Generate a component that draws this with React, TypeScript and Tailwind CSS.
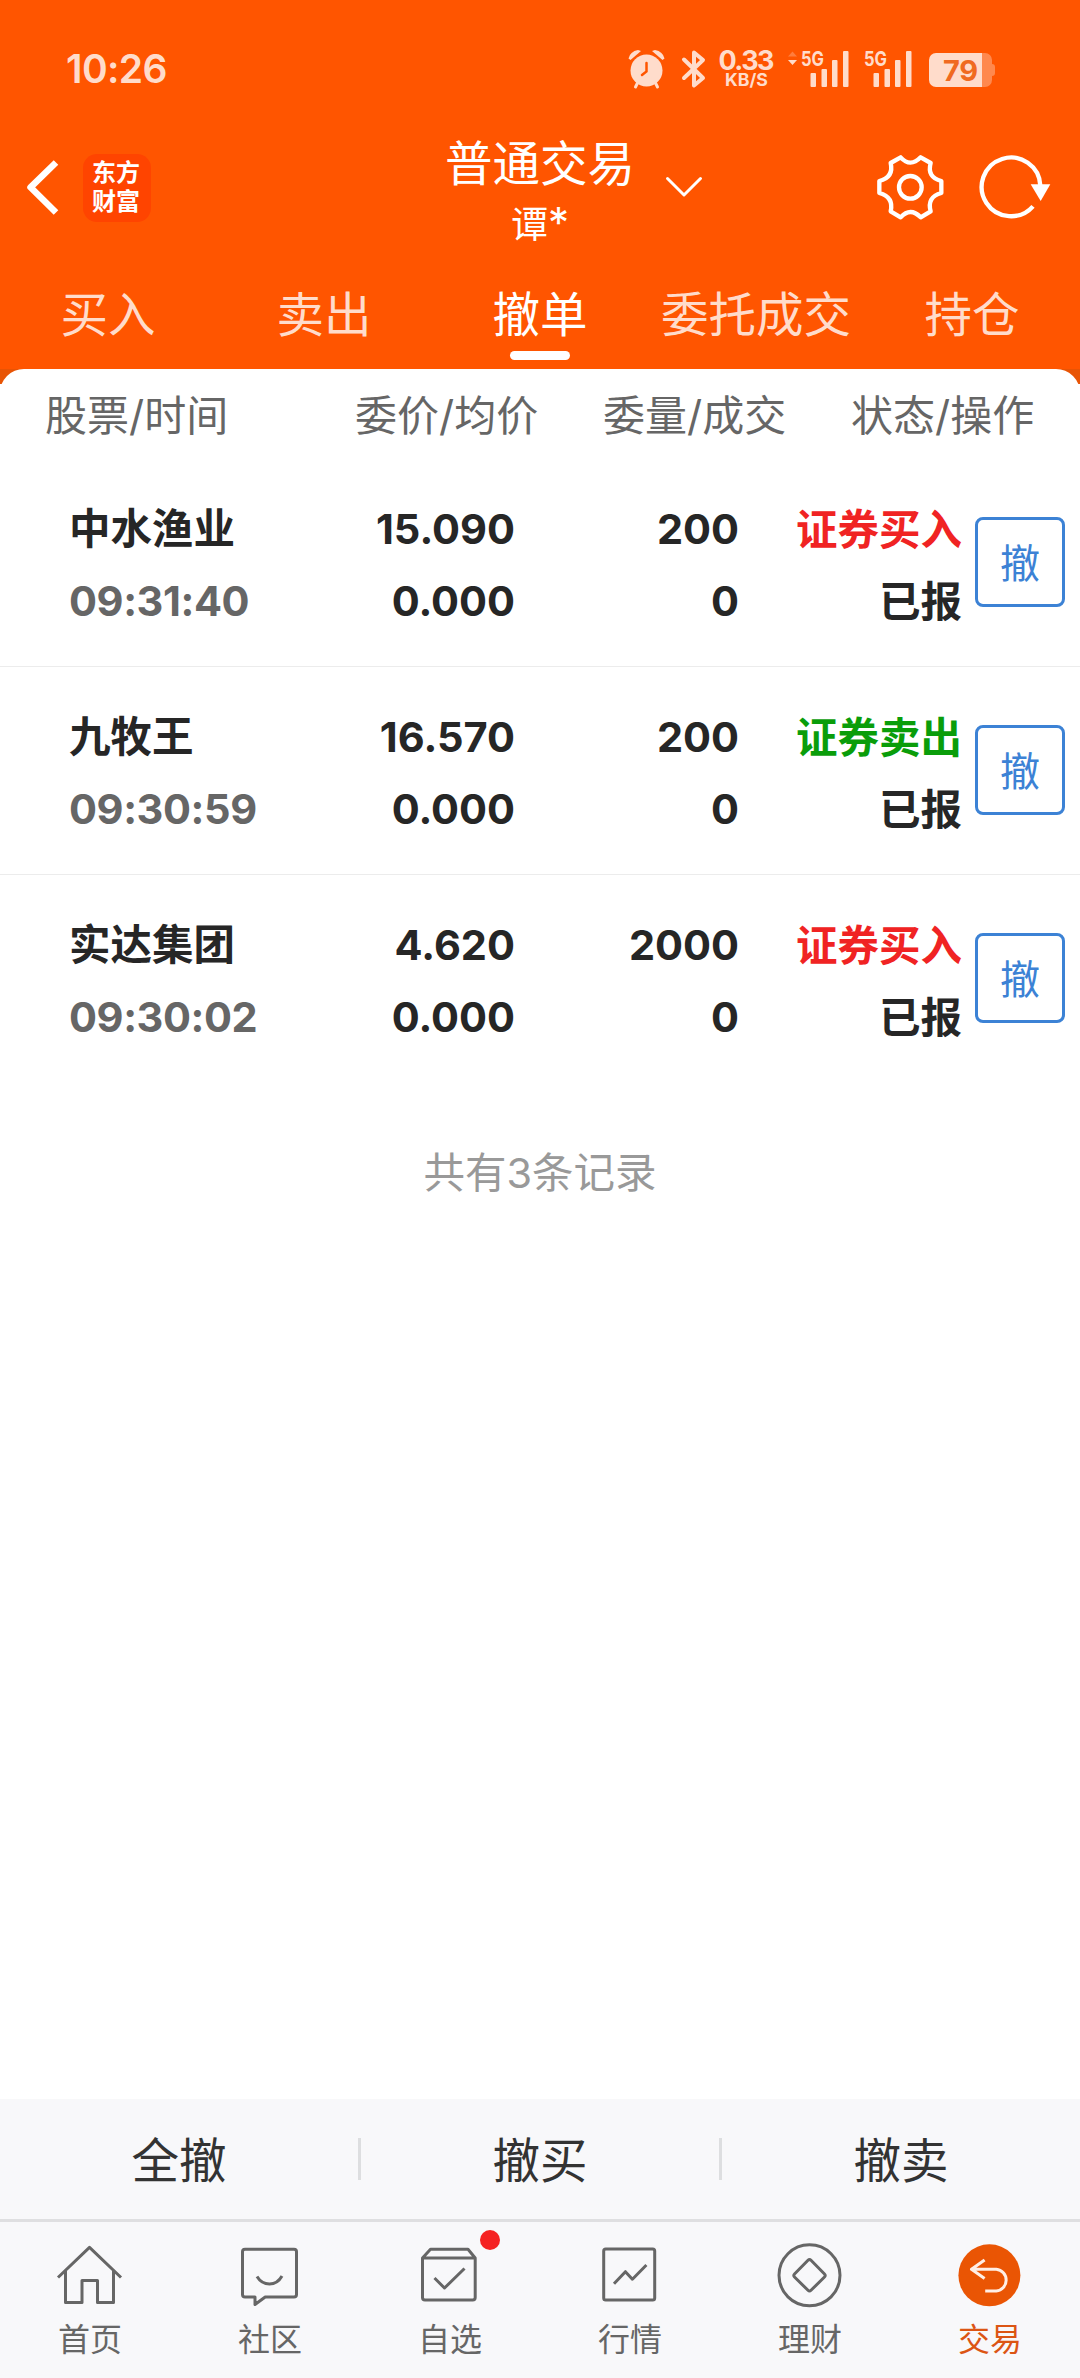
import React from "react";
import { clsx } from "clsx";

const tabs = ["买入", "卖出", "撤单", "委托成交", "持仓"];

const orders = [
  { name: "中水渔业", time: "09:31:40", price: "15.090", avg: "0.000", amount: "200", filled: "0", side: "buy" },
  { name: "九牧王", time: "09:30:59", price: "16.570", avg: "0.000", amount: "200", filled: "0", side: "sell" },
  { name: "实达集团", time: "09:30:02", price: "4.620", avg: "0.000", amount: "2000", filled: "0", side: "buy" },
];

export default function App() {
  return (
    <div className="flex h-[2378px] w-[1080px] flex-col overflow-hidden bg-white font-['Inter','Noto_Sans_CJK_SC',sans-serif] whitespace-nowrap text-[#262626]">
      <div className="h-[369px] bg-[#ff5500] text-white">
        <StatusBar />
        <TitleBar />
        <Tabs />
      </div>
      <div className="flex-1 bg-[linear-gradient(#e85405_15px,#ffffff_15px)]">
        <div className="h-full rounded-t-[24px] bg-white">
          <div className="flex h-[90px] pl-[45px] pt-[17px] text-[42px] leading-[60px] text-[#666666]">
            <span className="w-[310px]">股票/时间</span>
            <span className="w-[248px]">委价/均价</span>
            <span className="w-[248px]">委量/成交</span>
            <span>状态/操作</span>
          </div>
          {orders.map((order, i) => (
            <OrderRow key={order.name} order={order} last={i === orders.length - 1} />
          ))}
          <p className="pt-[60px] text-center text-[41.500px] leading-[60px] text-[#999999]">共有3条记录</p>
        </div>
      </div>
      <div className="flex h-[120px] items-center bg-[#f8f8fa] text-[47.500px] text-[#333333]">
        {["全撤", "撤买", "撤卖"].map((label, i) => (
          <React.Fragment key={label}>
            {i > 0 && <div className="h-[42px] w-[3px] bg-[#dddee0]" />}
            <button className="flex-1 pt-[3px] leading-[60px]">{label}</button>
          </React.Fragment>
        ))}
      </div>
      <BottomNav />
    </div>
  );
}

function OrderRow({ order, last }: { order: (typeof orders)[number]; last: boolean }) {
  return (
    <div
      className={clsx(
        "flex h-[208px] border-b pt-[34px] text-[41.500px] leading-[72px] font-bold",
        last ? "border-transparent" : "border-[#ececec]"
      )}
    >
      <div className="w-[300px] pl-[69px]">
        <p>{order.name}</p>
        <p className="tracking-[-0.4px] text-[#666666]">{order.time}</p>
      </div>
      <div className="w-[215px] text-right">
        <p>{order.price}</p>
        <p>{order.avg}</p>
      </div>
      <div className="w-[224px] text-right">
        <p>{order.amount}</p>
        <p>{order.filled}</p>
      </div>
      <div className="w-[223px] pt-px text-right">
        <p className={order.side === "buy" ? "text-[#f02323]" : "text-[#0a9d0a]"}>
          {order.side === "buy" ? "证券买入" : "证券卖出"}
        </p>
        <p>已报</p>
      </div>
      <button className="mt-[24px] ml-[13px] flex h-[90px] w-[90px] items-center justify-center rounded-[8px] border-3 border-[#3c82d5] pt-[4px] text-[40px] leading-none font-normal text-[#3c82d5]">
        撤
      </button>
    </div>
  );
}

function StatusBar() {
  return (
    <div className="flex h-[138px] items-start justify-between pr-[84px] pl-[66px] text-[#ffdccb]">
      <span className="mt-[45px] text-[39px] leading-[48px] font-semibold tracking-[-0.6px]">10:26</span>
      <svg className="mt-[44px]" width="370" height="50" viewBox="626 44 370 50" fill="currentColor">
        {/* alarm */}
        <circle cx="646.500" cy="70.500" r="16" />
        <path d="M628.500 58.500q1.500-7 9.500-8.500l3 1-10.500 9zM664.500 58.500q-1.500-7-9.500-8.500l-3 1 10.500 9z" />
        <path d="M637.500 83l-2 4M655.500 83l2 4" stroke="currentColor" strokeWidth="3" strokeLinecap="round" />
        <path d="M646.500 63v8.500l-4.500 3.500" fill="none" stroke="#ff5500" strokeWidth="2.500" strokeLinecap="round" />
        {/* bluetooth */}
        <path d="M684 59.500L703 78 694 85.500V52.500L703 60 684 78" fill="none" stroke="currentColor" strokeWidth="4" strokeLinecap="round" strokeLinejoin="round" />
        {/* network speed */}
        <text x="746.500" y="70" textAnchor="middle" fontSize="27" fontWeight="700" textLength="56">0.33</text>
        <text x="746.500" y="86" textAnchor="middle" fontSize="17" fontWeight="700" textLength="43" lengthAdjust="spacingAndGlyphs">KB/S</text>
        <path d="M788 56.500l4.500-5 4.500 5z" opacity=".3" />
        <path d="M788 60l4.500 5 4.500-5z" />
        {/* signals */}
        <Signal x={801} />
        <Signal x={864} />
        {/* battery */}
        <path d="M982 53h3a7 7 0 0 1 7 7v4q3 0 3 3v6q0 3-3 3v4a7 7 0 0 1-7 7h-3z" opacity=".38" />
        <path d="M936 53h46v34h-46a7 7 0 0 1-7-7V60a7 7 0 0 1 7-7z" />
        <text x="960.500" y="81" textAnchor="middle" fontSize="29" fontWeight="700" fill="#f06a20" textLength="35">79</text>
      </svg>
    </div>
  );
}

function Signal({ x }: { x: number }) {
  return (
    <g>
      <text x={x} y="65.500" fontSize="20" fontWeight="700" textLength="23" lengthAdjust="spacingAndGlyphs">5G</text>
      <rect x={x + 9.500} y="73" width="5.500" height="14" rx="1" />
      <rect x={x + 20.500} y="69" width="5.500" height="18" rx="1" />
      <rect x={x + 31} y="60" width="5.500" height="27" rx="1" />
      <rect x={x + 42} y="51" width="5.500" height="36" rx="1" />
    </g>
  );
}

function TitleBar() {
  return (
    <div className="grid h-[122px] grid-cols-3">
      <div className="flex items-start pt-[16px] pl-[26px]">
        <svg className="mt-[3px]" width="34" height="60" viewBox="26 157 34 60" fill="none" stroke="currentColor" strokeWidth="6.500">
          <path d="M56 162.500L30.500 187.300 56 212.500" strokeLinecap="butt" strokeLinejoin="round" />
        </svg>
        <div className="ml-[23px] h-[68px] w-[68px] rounded-[14px] bg-[#ff4400] pt-[4px] pr-[2px] text-center text-[24px] leading-[29px] font-bold">
          东方
          <br />
          财富
        </div>
      </div>
      <div className="relative text-center">
        <h1 className="pt-[2px] text-[47.500px] leading-[48px]">普通交易</h1>
        <p className="pt-[14px] text-[37px] leading-[40px]">
          谭<span className="text-[42px] leading-none">*</span>
        </p>
        <svg className="absolute top-[36px] left-[304px]" width="40" height="24" viewBox="664 174 40 24" fill="none" stroke="currentColor" strokeWidth="3">
          <path d="M667.500 178.500L684 195l16.500-16.500" strokeLinecap="round" strokeLinejoin="round" />
        </svg>
      </div>
      <div className="flex items-start justify-end gap-[31px] pt-[15px] pr-[28px]">
        <svg width="71" height="69" viewBox="105 68 213 207" fill="none" stroke="currentColor" strokeWidth="13" strokeLinejoin="round">
          <path d="M152 98L182 81Q211 113 242 81L272 98Q260 141 304 152V188Q260 200 272 243L242 261Q211 229 182 261L152 243Q162 200 118 188V152Q162 141 152 98Z" />
          <circle cx="211" cy="171" r="34" />
        </svg>
        <svg width="75" height="69" viewBox="410 68 225 207" fill="none" stroke="currentColor" strokeWidth="13">
          <path d="M578 228A88 88 0 1 1 600 166" />
          <path d="M571 162h59l-29 50z" fill="currentColor" stroke="none" />
        </svg>
      </div>
    </div>
  );
}

function Tabs() {
  return (
    <div className="grid grid-cols-5 pt-[25px] text-[47.500px] leading-[60px]">
      {tabs.map((tab) => (
        <div key={tab} className={clsx("flex flex-col items-center", tab === "撤单" ? "text-white" : "text-[#ffdccb]")}>
          <span>{tab}</span>
          {tab === "撤单" && <i className="mt-[6px] h-[9px] w-[60px] rounded-full bg-white" />}
        </div>
      ))}
    </div>
  );
}

const navItems = [
  {
    label: "首页",
    icon: (
      <>
        <path d="M0 34.500L31.500 4.300 63 34.500" />
        <path d="M7.500 28v31.500H24V37.500h15.500v22h16V28" />
      </>
    ),
  },
  {
    label: "社区",
    icon: (
      <>
        <path d="M7 6.300H56q2.500 0 2.500 2.500V51.500q0 2.500-2.500 2.500H27.200L17 61.500V54H7q-2.500 0-2.500-2.500V8.800Q4.500 6.300 7 6.300z" />
        <path d="M19 33.500q4.500 7.500 12.500 7.500T44 33" />
      </>
    ),
  },
  {
    label: "自选",
    dot: true,
    icon: (
      <>
        <path d="M4.500 15L12.500 6.300H50L57.200 15V54.500q0 2.500-2.500 2.500H7q-2.500 0-2.500-2.500zM4.500 15H57.200" />
        <path d="M16.500 35l10 10 20-19.500" />
      </>
    ),
  },
  {
    label: "行情",
    icon: (
      <>
        <rect x="5.700" y="6" width="51" height="51" rx="2" />
        <path d="M16 40.700L27.400 28.700l7 7.500L48.400 22" />
      </>
    ),
  },
  {
    label: "理财",
    icon: (
      <>
        <circle cx="31.500" cy="32.300" r="30.500" />
        <path d="M30 17.300q1.500-1.500 3 0L46.500 31q1.500 1.500 0 3L33 47.300q-1.500 1.500-3 0L16.500 34q-1.500-1.500 0-3z" />
      </>
    ),
  },
  {
    label: "交易",
    active: true,
    icon: (
      <>
        <circle cx="31.400" cy="32.300" r="31" fill="#ea5504" stroke="none" />
        <path d="M26.600 17L13.500 26.300 26.600 35.500M14 26.300H38.300a10.900 10.900 0 0 1 0 21.700H27.200" stroke="#ffefe6" />
      </>
    ),
  },
];

function BottomNav() {
  return (
    <div className="grid h-[159px] grid-cols-6 border-t-3 border-[#dfdfe1] bg-[#f8f8fa] pt-[21px]">
      {navItems.map((item) => (
        <div key={item.label} className={clsx("flex flex-col items-center", item.active ? "text-[#dc5514]" : "text-[#666666]")}>
          <div className="relative">
            <svg className="overflow-visible" width="64" height="64" viewBox="0 0 64 64" fill="none" stroke="currentColor" strokeWidth="3" strokeLinejoin="round">
              {item.icon}
            </svg>
            {item.dot && <i className="absolute -top-[13px] left-[62px] h-[20px] w-[20px] rounded-full bg-[#f52222]" />}
          </div>
          <span className="mt-[13px] text-[32px] leading-[40px]">{item.label}</span>
        </div>
      ))}
    </div>
  );
}
